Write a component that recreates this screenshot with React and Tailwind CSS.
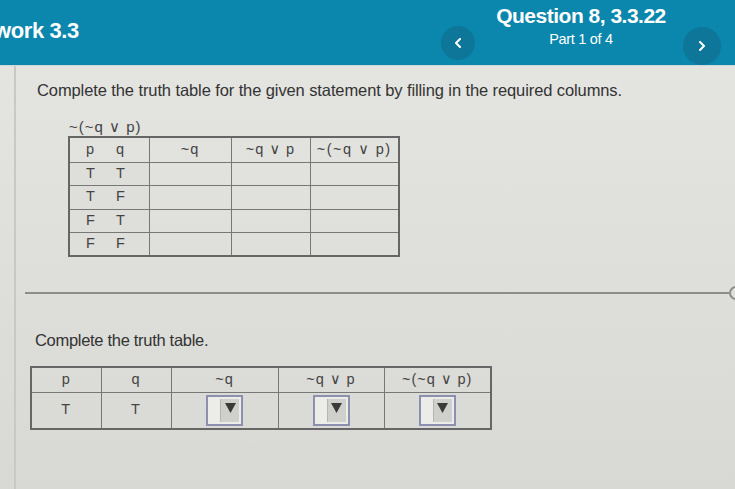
import React from 'react';

const font = { fontFamily: '"Liberation Sans", Arial, "DejaVu Sans", sans-serif' };

function Chevron({ dir }) {
  return (
    <svg width="8" height="10" viewBox="0 0 8 10">
      <path d={dir === 'left' ? 'M6 1 L2 5 L6 9' : 'M2 1 L6 5 L2 9'} stroke="white" strokeWidth="2" fill="none" strokeLinecap="round" strokeLinejoin="round" />
    </svg>
  );
}

function Dropdown() {
  return (
    <div className="mx-auto w-[37px] h-[31px] border-2 border-[#8c90ae] bg-[#ecece9] flex justify-end items-stretch p-[2px]">
      <div className="w-[19px] bg-[#cfcfcc] border-l border-[#b5b5b2] flex items-start justify-center pt-[4px]">
        <svg width="11" height="10" viewBox="0 0 11 10">
          <path d="M0 0 L11 0 L5.5 10 Z" fill="#3a3a3a" />
        </svg>
      </div>
    </div>
  );
}

export default function App() {
  const rows = [['T', 'T'], ['T', 'F'], ['F', 'T'], ['F', 'F']];
  const cell = 'border border-[#777]';
  return (
    <div className="w-[735px] h-[489px] overflow-hidden bg-gradient-to-b from-[#e6e6e3] to-[#d8d8d4] text-[#333]" style={font}>
      <header className="h-[66px] bg-[#0b86ad] text-white flex items-start border-b border-[#cfd8da]">
        <div className="-ml-[6px] pt-[14px] text-[22px] font-bold tracking-[-0.4px]">work 3.3</div>
        <div className="flex-1" />
        <div className="mt-[26px] w-[34px] h-[34px] rounded-full bg-[#0d7699] flex items-center justify-center"><Chevron dir="left" /></div>
        <div className="ml-[17px] w-[178px] flex flex-col items-center pt-[3px]">
          <div className="text-[21px] font-bold leading-[26px] tracking-[-0.5px]">Question 8, 3.3.22</div>
          <div className="text-[14.5px] leading-[18px] mt-[1px] tracking-[-0.3px]">Part 1 of 4</div>
        </div>
        <div className="ml-[13px] mr-[14px] mt-[27px] w-[38px] h-[38px] rounded-full bg-[#0d7699] flex items-center justify-center"><Chevron dir="right" /></div>
      </header>

      <div className="flex h-[423px]">
        <div className="w-[16px] border-r-2 border-[#c8c8c5] shrink-0" />
        <div className="flex-1">
          <p className="ml-[21px] mt-[14px] text-[16.5px] leading-[20px] tracking-[-0.1px]">
            Complete the truth table for the given statement by filling in the required columns.
          </p>
          <div className="ml-[53px] mt-[18px] text-[15px] leading-[18px] tracking-[1px] text-[#444]">~(~q ∨ p)</div>
          <table className="ml-[52px] border-collapse border-2 border-[#666] text-[14.5px] text-[#444] tracking-[1px]">
            <tbody>
              <tr className="h-[25px]">
                <td className={`w-[80px] ${cell} pl-[16px]`}><span className="inline-block w-[30px]">p</span>q</td>
                <td className={`w-[82px] ${cell} text-center`}>~q</td>
                <td className={`w-[79px] ${cell} text-center`}>~q ∨ p</td>
                <td className={`w-[89px] ${cell} text-center tracking-[1.5px]`}>~(~q ∨ p)</td>
              </tr>
              {rows.map((r, i) => (
                <tr key={i} className="h-[23.5px]">
                  <td className={`${cell} pl-[16px] bg-[#dededb]`}><span className="inline-block w-[30px]">{r[0]}</span>{r[1]}</td>
                  <td className={cell} />
                  <td className={cell} />
                  <td className={cell} />
                </tr>
              ))}
            </tbody>
          </table>

          <div className="mt-[29px] flex items-center">
            <div className="ml-[9px] flex-1 h-[2px] bg-[#8c8c8a]" />
            <div className="w-[14px] h-[14px] rounded-full border-2 border-[#8c8c8a] -mr-[8px]" />
          </div>

          <p className="ml-[19px] mt-[30px] text-[16.5px] leading-[20px] tracking-[-0.3px]">Complete the truth table.</p>

          <table className="ml-[14px] mt-[16px] border-collapse border-2 border-[#666] text-[14.5px] text-[#444] tracking-[1px]">
            <tbody>
              <tr className="h-[25px]">
                <td className={`w-[70px] ${cell} text-center`}>p</td>
                <td className={`w-[70px] ${cell} text-center`}>q</td>
                <td className={`w-[107px] ${cell} text-center`}>~q</td>
                <td className={`w-[106px] ${cell} text-center`}>~q ∨ p</td>
                <td className={`w-[107px] ${cell} text-center`}>~(~q ∨ p)</td>
              </tr>
              <tr className="h-[37px]">
                <td className={`${cell} text-center`}>T</td>
                <td className={`${cell} text-center`}>T</td>
                <td className={cell}><Dropdown /></td>
                <td className={cell}><Dropdown /></td>
                <td className={cell}><Dropdown /></td>
              </tr>
            </tbody>
          </table>
        </div>
      </div>
    </div>
  );
}
